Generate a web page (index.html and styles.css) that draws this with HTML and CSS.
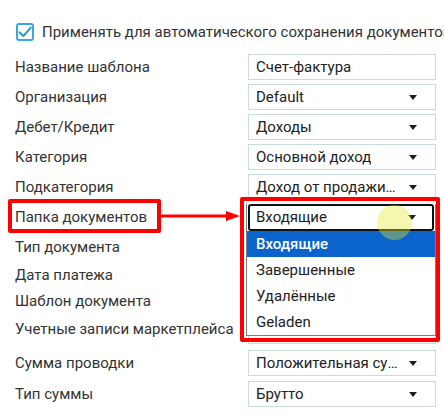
FILE: index.html
```html
<!DOCTYPE html>
<html lang="ru">
<head>
<meta charset="utf-8">
<link rel="stylesheet" href="styles.css">
</head>
<body>
<div class="page">
  <div class="check-row">
    <span class="checkbox">
      <svg width="14" height="14" viewBox="0 0 14 14"><path d="M1.5 7.2 L5.3 11 L12.8 2.6" fill="none" stroke="#2b9ad8" stroke-width="2" stroke-linecap="round" stroke-linejoin="round"/></svg>
    </span>
    <span class="check-text">Применять для автоматического сохранения документов</span>
  </div>

  <div class="row"><span class="label">Название шаблона</span><div class="field"><span class="value">Счет-фактура</span></div></div>
  <div class="row"><span class="label">Организация</span><div class="field select"><span class="value">Default</span><span class="caret"></span></div></div>
  <div class="row"><span class="label">Дебет/Кредит</span><div class="field select"><span class="value">Доходы</span><span class="caret"></span></div></div>
  <div class="row"><span class="label">Категория</span><div class="field select"><span class="value">Основной доход</span><span class="caret"></span></div></div>
  <div class="row"><span class="label">Подкатегория</span><div class="field select tight"><span class="value">Доход от продажи товаров</span><span class="caret"></span></div></div>
  <div class="row"><span class="label">Папка документов</span>
    <div class="open-wrap">
      <div class="popup">
        <div class="option active">Входящие</div>
        <div class="option">Завершенные</div>
        <div class="option">Удалённые</div>
        <div class="option">Geladen</div>
      </div>
      <div class="field select focused"><span class="value">Входящие</span><span class="caret"></span></div>
    </div>
  </div>
  <div class="row"><span class="label">Тип документа</span><div class="field select"><span class="caret"></span></div></div>
  <div class="row short"><span class="label">Дата платежа</span><div class="field"></div></div>
  <div class="row short"><span class="label">Шаблон документа</span><div class="field select"><span class="caret"></span></div></div>
  <div class="row tall"><span class="label lift">Учетные записи маркетплейса</span><div class="field select"><span class="value">Все</span><span class="caret"></span></div></div>
  <div class="row"><span class="label">Сумма проводки</span><div class="field select"><span class="value">Положительная сумма</span><span class="caret"></span></div></div>
  <div class="row last"><span class="label">Тип суммы</span><div class="field select"><span class="value">Брутто</span><span class="caret"></span></div></div>

  <div class="mark-label"></div>
  <div class="mark-list"></div>
  <svg class="mark-arrow" width="82" height="14" viewBox="0 0 82 14"><line x1="0" y1="7" x2="68" y2="7" stroke="#f00" stroke-width="3"/><polygon points="66,2 80,7 66,12" fill="#f00"/></svg>
  <div class="cursor-dot"></div>
</div>
</body>
</html>
```

FILE: styles.css
```css
html, body {
  margin: 0;
  padding: 0;
  background: #fff;
  overflow: hidden;
}
body {
  width: 444px;
  height: 416px;
  font-family: Roboto, "Noto Sans", "Liberation Sans", sans-serif;
  font-size: 15px;
  color: #333;
}
.page {
  position: relative;
  padding: 23px 0 0 15px;
  width: 429px;
  height: 393px;
  overflow: hidden;
}
.check-row {
  display: flex;
  align-items: center;
  gap: 8px;
  height: 18px;
  margin-bottom: 11px;
  white-space: nowrap;
}
.checkbox {
  flex: none;
  margin-left: 1px;
  width: 18px;
  height: 18px;
  box-sizing: border-box;
  border: 2px solid #3ba7e0;
  border-radius: 3px;
  display: flex;
  align-items: center;
  justify-content: center;
}
.check-text {
  color: #333;
}
.row {
  display: flex;
  align-items: center;
  height: 30px;
  white-space: nowrap;
}
.row.short { height: 26px; }
.row.tall { height: 34px; }
.row.last { height: 31px; }
.label {
  width: 233px;
  flex: none;
}
.label.lift { position: relative; top: -2px; }
.field {
  position: relative;
  width: 188px;
  height: 26px;
  box-sizing: border-box;
  border: 1px solid #c8dbe0;
  background: #fff;
  color: #222;
  display: flex;
  align-items: center;
  padding: 0 8px 0 7px;
}
.field.select { padding-right: 33px; }
.field.select.tight { padding-right: 37px; }
.value {
  overflow: hidden;
  text-overflow: ellipsis;
  white-space: nowrap;
}
.caret {
  position: absolute;
  right: 18px;
  top: 50%;
  margin-top: -2px;
  width: 0;
  height: 0;
  border-left: 4px solid transparent;
  border-right: 4px solid transparent;
  border-top: 5px solid #1e1e1e;
}
.open-wrap {
  position: relative;
  width: 188px;
  height: 27px;
}
.field.focused {
  position: relative;
  z-index: 2;
  width: 186px;
  height: 27px;
  border: 2px solid #111;
  border-radius: 3px;
  padding-left: 6px;
}
.field.focused .caret { right: 16px; }
.popup {
  position: absolute;
  z-index: 1;
  left: -2px;
  top: 0;
  width: 190px;
  box-sizing: border-box;
  padding-top: 27px;
  border: 1px solid #7d7d7d;
  border-top: none;
  background: #fff;
  color: #222;
}
.option {
  height: 26px;
  line-height: 26px;
  padding-left: 9px;
}
.option.active {
  background: #0b63cc;
  color: #fff;
  font-weight: 500;
}
.mark-label {
  position: absolute;
  left: 8px;
  top: 199px;
  width: 153px;
  height: 34px;
  box-sizing: border-box;
  border: 4px solid #f00;
  border-radius: 2px;
  z-index: 3;
}
.mark-list {
  position: absolute;
  left: 240px;
  top: 197px;
  width: 200px;
  height: 145px;
  box-sizing: border-box;
  border: 4px solid #f00;
  border-radius: 2px;
  z-index: 3;
}
.mark-arrow {
  position: absolute;
  left: 160px;
  top: 209px;
  z-index: 3;
}
.cursor-dot {
  position: absolute;
  left: 377px;
  top: 205px;
  width: 35px;
  height: 35px;
  border-radius: 50%;
  background: rgba(225, 235, 40, 0.38);
  z-index: 4;
}
```
